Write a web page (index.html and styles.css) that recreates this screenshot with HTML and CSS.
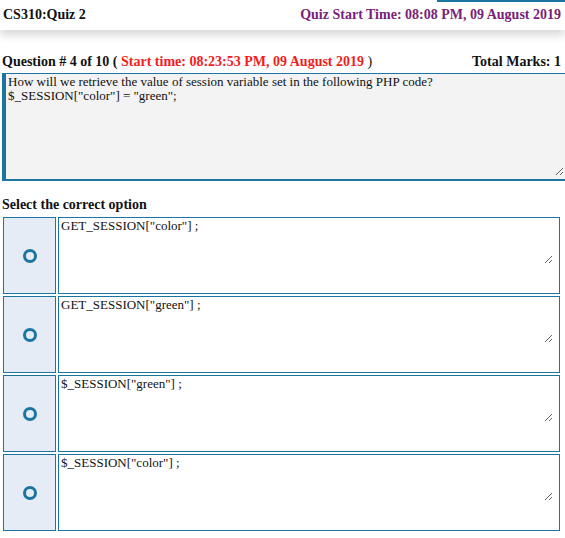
FILE: index.html
```html
<!DOCTYPE html>
<html lang="en">
<head>
    <meta charset="UTF-8">
    <meta name="viewport" content="width=device-width, initial-scale=1.0">
    <title>CS310:Quiz 2</title>
    <link rel="stylesheet" href="styles.css">
</head>
<body>
    <header class="quiz-bar">
        <span class="quiz-name">CS310:Quiz 2</span>
        <span class="quiz-start">Quiz Start Time: 08:08 PM, 09 August 2019</span>
    </header>

    <main class="quiz-body">
        <div class="question-head">
            <span class="question-no">Question # 4 of 10 ( <span class="question-time">Start time: 08:23:53 PM, 09 August 2019</span> <span class="plain">)</span></span>
            <span class="question-marks">Total Marks: 1</span>
        </div>

        <div class="question-box">
            <textarea class="question-text" readonly>How will we retrieve the value of session variable set in the following PHP code?
$_SESSION["color"] = "green";</textarea>
        </div>

        <h3 class="options-title">Select the correct option</h3>

        <div class="options">
            <div class="option">
                <label class="option-pick"><span class="ring"></span></label>
                <div class="option-cell"><textarea class="option-text" readonly>GET_SESSION["color"] ;</textarea></div>
            </div>
            <div class="option">
                <label class="option-pick"><span class="ring"></span></label>
                <div class="option-cell"><textarea class="option-text" readonly>GET_SESSION["green"] ;</textarea></div>
            </div>
            <div class="option">
                <label class="option-pick"><span class="ring"></span></label>
                <div class="option-cell"><textarea class="option-text" readonly>$_SESSION["green"] ;</textarea></div>
            </div>
            <div class="option">
                <label class="option-pick"><span class="ring"></span></label>
                <div class="option-cell"><textarea class="option-text" readonly>$_SESSION["color"] ;</textarea></div>
            </div>
        </div>
    </main>
</body>
</html>
```

FILE: styles.css
```css
body {
    margin: 0;
    font-family: 'Liberation Serif', 'Times New Roman', serif;
    color: #111;
    background: #fff;
}
.quiz-bar {
    position: relative;
    display: flex;
    justify-content: space-between;
    align-items: center;
    height: 30px;
    padding: 0 4px 0 3px;
    font-size: 14px;
    font-weight: bold;
    background: #fff;
    box-shadow: 0 5px 10px rgba(0, 0, 0, 0.16);
}
/* tab underline at the top right */
.quiz-bar::before {
    content: '';
    position: absolute;
    top: 0;
    right: 0;
    width: 128px;
    height: 2px;
    background: #1b75a0;
}
.quiz-start {
    color: #7a1e78;
}
.quiz-body {
    padding-top: 22px;
}
.question-head {
    display: flex;
    justify-content: space-between;
    padding: 0 4px 0 2px;
    font-size: 14px;
    line-height: 20px;
    font-weight: bold;
}
.question-time {
    color: #f21d1d;
}
.plain {
    font-weight: normal;
}
.question-box {
    box-sizing: border-box;
    height: 108px;
    margin: 1px 0 0 2px;
    border-top: 1px solid #1b75a0;
    border-bottom: 2px solid #1b75a0;
    border-left: 4px solid #1b75a0;
    background: #f3f3f3;
}
.question-text {
    display: block;
    box-sizing: border-box;
    width: calc(100% - 1px);
    height: 102px;
    margin: 0;
    padding: 1px 2px;
    border: none;
    background: transparent;
    font-family: inherit;
    font-size: 13px;
    line-height: 14px;
    color: #111;
    outline: none;
}
.options-title {
    margin: 14px 0 2px 2px;
    font-size: 14px;
    line-height: 20px;
}
.options {
    display: flex;
    flex-direction: column;
    gap: 2px;
    padding: 0 5px 0 3px;
}
.option {
    display: flex;
    gap: 2px;
    height: 77px;
}
.option-pick {
    box-sizing: border-box;
    width: 53px;
    flex: none;
    display: flex;
    align-items: center;
    justify-content: center;
    border: 1px solid #1b75a0;
    background: #e6ecf6;
}
.ring {
    width: 8px;
    height: 8px;
    border: 3px solid #1b75a0;
    border-radius: 50%;
}
.option-cell {
    flex: 1;
    box-sizing: border-box;
    border: 1px solid #1b75a0;
    background: #fff;
}
.option-text {
    display: block;
    box-sizing: border-box;
    width: calc(100% - 6px);
    height: 46px;
    margin: 0;
    padding: 1px 2px;
    border: none;
    background: transparent;
    font-family: inherit;
    font-size: 13px;
    line-height: 14px;
    color: #111;
    outline: none;
}
```
